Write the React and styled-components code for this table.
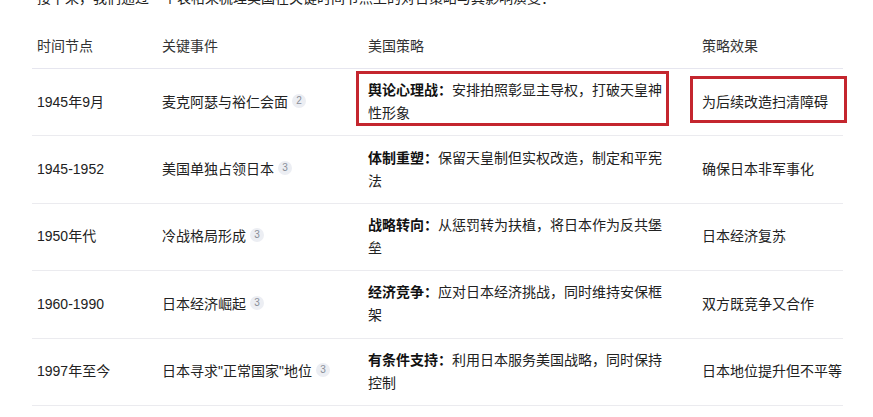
import React from 'react';
import styled, { createGlobalStyle } from 'styled-components';

const rows = [
  {
    time: '1945年9月',
    event: '麦克阿瑟与裕仁会面',
    ref: 2,
    tag: '舆论心理战',
    text: '安排拍照彰显主导权，打破天皇神性形象',
    effect: '为后续改造扫清障碍',
    marked: true,
  },
  {
    time: '1945-1952',
    event: '美国单独占领日本',
    ref: 3,
    tag: '体制重塑',
    text: '保留天皇制但实权改造，制定和平宪法',
    effect: '确保日本非军事化',
  },
  {
    time: '1950年代',
    event: '冷战格局形成',
    ref: 3,
    tag: '战略转向',
    text: '从惩罚转为扶植，将日本作为反共堡垒',
    effect: '日本经济复苏',
  },
  {
    time: '1960-1990',
    event: '日本经济崛起',
    ref: 3,
    tag: '经济竞争',
    text: '应对日本经济挑战，同时维持安保框架',
    effect: '双方既竞争又合作',
  },
  {
    time: '1997年至今',
    event: '日本寻求"正常国家"地位',
    ref: 3,
    tag: '有条件支持',
    text: '利用日本服务美国战略，同时保持控制',
    effect: '日本地位提升但不平等',
  },
];

const GlobalStyle = createGlobalStyle`
  body {
    margin: 0;
    background: #ffffff;
    font-family: "Liberation Sans", "Noto Sans CJK SC", sans-serif;
    color: #222222;
    overflow: hidden;
  }
`;

const Page = styled.div`
  width: 873px;
  height: 417px;
  overflow: hidden;
`;

const Intro = styled.p`
  margin: -14px 0 14px 37px;
  font-size: 14px;
  line-height: 24px;
  color: #222;
  white-space: nowrap;
`;

const Table = styled.div`
  margin-left: 32px;
  width: 811px;
  display: grid;
  grid-template-columns: 125px 206px 334px 146px;
`;

const Row = styled.div`
  display: contents;
`;

const Cell = styled.div`
  box-sizing: border-box;
  height: ${(p) => (p.$head ? '45px' : '67.4px')};
  padding: 0 5px;
  display: flex;
  align-items: center;
  border-bottom: 1px solid ${(p) => (p.$head ? '#e6e6ef' : '#ebebef')};
  font-size: 14px;
  line-height: 23px;
  color: ${(p) => (p.$head ? '#333' : '#222')};
  white-space: ${(p) => (p.$wrap ? 'normal' : 'nowrap')};
`;

const Marked = styled.span`
  position: relative;
  display: block;
  width: ${(p) => p.$width || 'auto'};

  &::after {
    content: ${(p) => (p.$box ? "''" : 'none')};
    position: absolute;
    inset: ${(p) => p.$box};
    border: 3px solid #c4262e;
    pointer-events: none;
  }
`;

const Tag = styled.b`
  font-weight: 700;
  color: #111;
`;

const Ref = styled.span`
  display: inline-flex;
  align-items: center;
  justify-content: center;
  width: 14px;
  height: 14px;
  margin-left: 4px;
  margin-top: -3px;
  border-radius: 50%;
  background: #eceef3;
  color: #8a8f99;
  font-size: 10px;
  line-height: 1;
`;

export default function App() {
  return (
    <Page>
      <GlobalStyle />
      <Intro>接下来，我们通过一个表格来梳理美国在关键时间节点上的对日策略与其影响演变：</Intro>
      <Table>
        <Row>
          <Cell $head>时间节点</Cell>
          <Cell $head>关键事件</Cell>
          <Cell $head>美国策略</Cell>
          <Cell $head>策略效果</Cell>
        </Row>
        {rows.map((r) => (
          <Row key={r.time}>
            <Cell>{r.time}</Cell>
            <Cell>
              {r.event}
              <Ref>{r.ref}</Ref>
            </Cell>
            <Cell $wrap>
              <Marked $width="300px" $box={r.marked ? '-8px -1px -1px -12px' : null}>
                <Tag>{r.tag}：</Tag>
                {r.text}
              </Marked>
            </Cell>
            <Cell>
              <Marked $box={r.marked ? '-15px -19px -9px -12px' : null}>{r.effect}</Marked>
            </Cell>
          </Row>
        ))}
      </Table>
    </Page>
  );
}
